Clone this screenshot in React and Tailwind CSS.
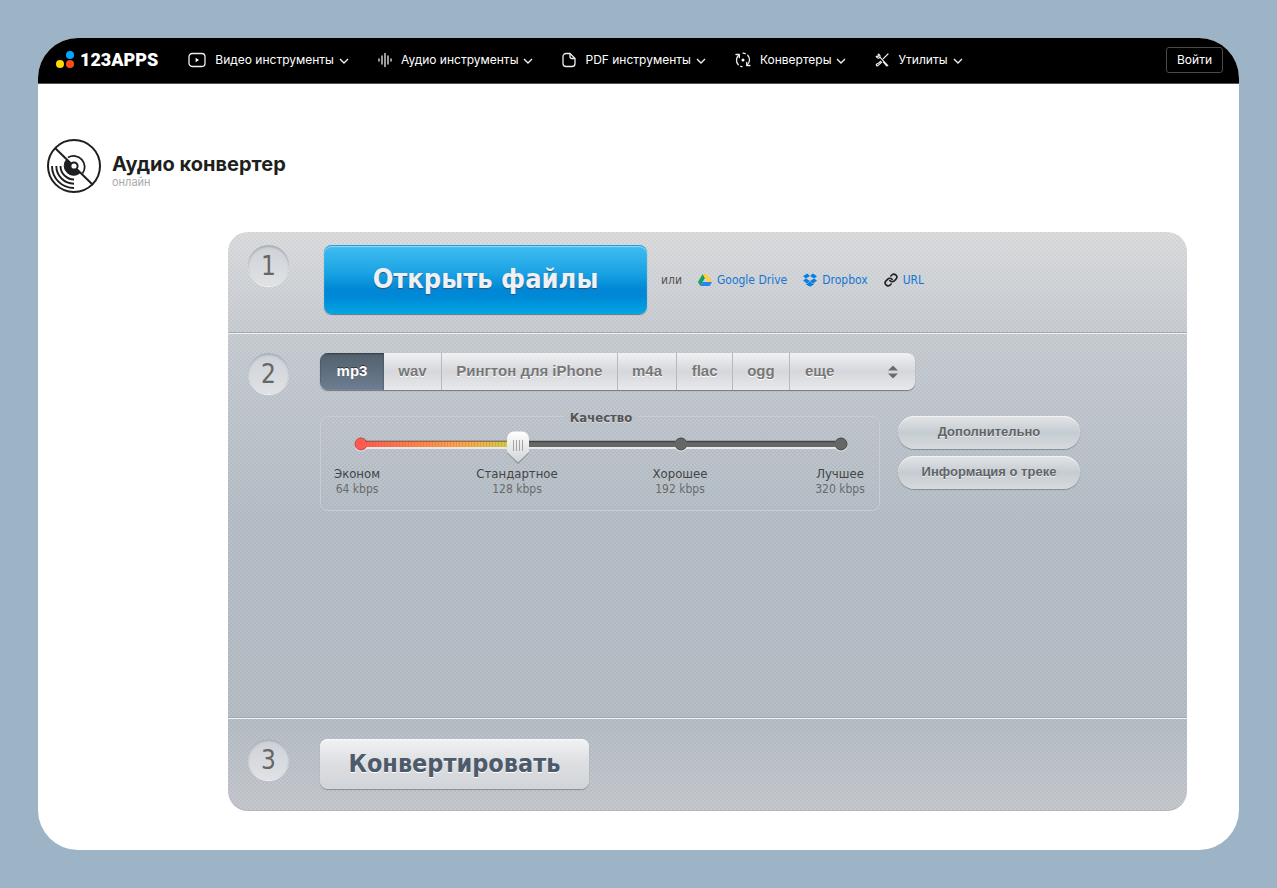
import { useState } from "react";

const navIcons = {
  video: (
    <svg width="18" height="16" viewBox="0 0 18 16" fill="none" stroke="#eee" strokeWidth="1.3">
      <rect x="1" y="1.5" width="16" height="13" rx="3.2" />
      <path d="M7.6 5.7v4.6L11 8z" fill="#fff" stroke="none" />
    </svg>
  ),
  audio: (
    <svg width="14" height="16" viewBox="0 0 14 16" fill="none" stroke="#eee" strokeWidth="1.3" strokeLinecap="round">
      <path d="M1 7v2M4 4v8M7 1.5v13M10 4v8M13 7v2" />
    </svg>
  ),
  pdf: (
    <svg width="14" height="16" viewBox="0 0 14 16" fill="none" stroke="#eee" strokeWidth="1.3" strokeLinejoin="round">
      <path d="M8 1.5H4A3 3 0 0 0 1 4.500v7a3 3 0 0 0 3 3h6a3 3 0 0 0 3-3V6.500z" />
      <path d="M8 1.500v3a2 2 0 0 0 2 2h3" />
    </svg>
  ),
  convert: (
    <svg width="16" height="16" viewBox="0 0 16 16" fill="none" stroke="#eee" strokeWidth="1.3" strokeLinecap="round" strokeLinejoin="round">
      <path d="M4 3A6.700 6.700 0 0 0 3.300 12.800M5.700 14.300l1.300.4M12 13A6.700 6.700 0 0 0 12.700 3.200M10.300 1.700l-2.300-.5" />
      <path d="M1 2.500h3.300v3.200M15 13.500h-3.300v-3.200" />
      <circle cx="8" cy="8" r="1.500" fill="#fff" stroke="none" />
    </svg>
  ),
  tools: (
    <svg width="14" height="14" viewBox="0 0 14 14" fill="none" stroke="#eee" strokeWidth="1.200" strokeLinecap="round" strokeLinejoin="round">
      <path d="M13 1 8.300 5.700M5.700 8.300 4.400 9.500 1.500 11.200a1 1 0 0 0 1.400 1.400L6.800 9.100" />
      <path d="M3.300 1.200a2.300 2.300 0 0 1 1.600 3L12.800 12.600M1.200 3.300a2.300 2.300 0 0 0 3 1.600M3.300 1.200v2.100H1.200M8.600 9.300l3.100 3.500" />
    </svg>
  ),
};

const navItems = [
  { label: "Видео инструменты", icon: "video" },
  { label: "Аудио инструменты", icon: "audio" },
  { label: "PDF инструменты", icon: "pdf" },
  { label: "Конвертеры", icon: "convert" },
  { label: "Утилиты", icon: "tools" },
];

const formats = ["mp3", "wav", "Рингтон для iPhone", "m4a", "flac", "ogg"];
const moreFormats = ["mp2", "amr"];

const levels = [
  { name: "Эконом", rate: "64 kbps" },
  { name: "Стандартное", rate: "128 kbps" },
  { name: "Хорошее", rate: "192 kbps" },
  { name: "Лучшее", rate: "320 kbps" },
];

function Header() {
  return (
    <header className="flex h-[46px] items-center border-b border-[#555] bg-black pr-4 pb-0.5 pl-[18px] font-[Inter,sans-serif] text-[12px] text-white">
      <a href="#home" className="mr-[30px] flex items-center gap-1">
        <svg width="20" height="20" viewBox="0 0 20 20" className="shrink-0">
          <circle cx="14" cy="5" r="4" fill="#00a8ff" />
          <circle cx="4" cy="14" r="4" fill="#ffd800" />
          <circle cx="14" cy="14" r="4" fill="#ff4c13" />
        </svg>
        <span className="font-[Roboto,sans-serif] text-[18px] leading-6 font-black">123APPS</span>
      </a>
      <nav className="flex flex-1 items-center gap-[29px]">
        {navItems.map((item) => (
          <a key={item.label} href="#menu" className="flex items-center whitespace-nowrap">
            <span className="mr-[9px] shrink-0">{navIcons[item.icon]}</span>
            {item.label}
            <svg width="10" height="6" viewBox="0 0 10 6" className="mt-0.5 ml-[5px] shrink-0" fill="none" stroke="#eee" strokeWidth="1.400">
              <path d="M1 1l4 4 4-4" />
            </svg>
          </a>
        ))}
      </nav>
      <button className="h-[26px] rounded-[3px] border border-[#4a4a4a] px-2.5">Войти</button>
    </header>
  );
}

function Disc() {
  return (
    <svg width="56" height="56" viewBox="0 0 56 56" fill="none" stroke="#1d1f20" strokeWidth="2">
      <circle cx="28" cy="28" r="26" />
      <path d="M9 10l38 37" />
      <path d="M22 19.500a11 11 0 0 1 14.500 16" strokeWidth="1.800" />
      <path d="M21 21a9.500 9.500 0 0 0 13.500 13.500z" fill="#1d1f20" strokeWidth="1" />
      <circle cx="28" cy="28" r="3.600" fill="#fff" strokeWidth="2" />
      <path d="M14.500 28A13.500 13.500 0 0 0 28 41.500M10.300 28A17.700 17.700 0 0 0 28 45.700M6 28A22 22 0 0 0 28 50" strokeWidth="1.900" />
    </svg>
  );
}

function StepNumber({ children }) {
  return (
    <span className="mr-[35px] flex size-[41px] shrink-0 items-center justify-center rounded-full bg-linear-to-b from-[#cdd1d7] to-[#e0e2e4] font-['DejaVu_Sans_Condensed','DejaVu_Sans',sans-serif] text-[26px] leading-none text-[#666] shadow-[inset_0_2px_2px_#a9afb7,0_1px_0_#f2f3f5]">
      {children}
    </span>
  );
}

function QualitySlider() {
  const [value, setValue] = useState(1);
  const x = [10, 167, 330, 490][value];
  return (
    <fieldset className="h-[105px] w-[560px] rounded-lg border border-[#c9ced3] pr-[28px] pl-[30px] shadow-[inset_0_0_1px_#a9b1ba]">
      <legend className="mx-auto px-1.5 pt-1 font-['DejaVu_Sans_Condensed','DejaVu_Sans',sans-serif] text-[13px] leading-4 font-bold text-[#555] [text-shadow:0_1px_0_#d5dae0]">
        Качество
      </legend>
      <div className="relative mt-[3px] h-9 w-[500px]">
        <svg width="500" height="36" viewBox="0 0 500 36">
          <defs>
            <linearGradient id="heat" gradientUnits="userSpaceOnUse" x1="10" x2="170" y1="0" y2="0">
              <stop offset="0" stopColor="#ff5a50" />
              <stop offset=".6" stopColor="#ff9f4a" />
              <stop offset="1" stopColor="#c6d548" />
            </linearGradient>
            <linearGradient id="handle" x1="0" x2="0" y1="0" y2="1">
              <stop offset="0" stopColor="#fff" />
              <stop offset="1" stopColor="#d2d3d5" />
            </linearGradient>
            <pattern id="ribs" width="3" height="8" patternUnits="userSpaceOnUse">
              <path d="M.5 0v8" stroke="#8a5a20" strokeOpacity=".18" />
            </pattern>
          </defs>
          <g fill="#e6e9ec">
            <circle cx="10" cy="16" r="6.500" />
            <circle cx="330" cy="16" r="6.500" />
            <circle cx="490" cy="16" r="6.500" />
            <rect x="10" y="13" width="480" height="7" />
          </g>
          <g fill="#666" stroke="#444">
            <circle cx="330" cy="15" r="6" />
            <circle cx="490" cy="15" r="6" />
          </g>
          <rect x="10" y="12" width="480" height="6" fill="#666" />
          <path d="M10 12.500H324.500M335.500 12.500H484.500" stroke="#444" strokeWidth="1.500" />
          <circle cx="10" cy="15" r="6" fill="#ff5a50" stroke="#b8484a" />
          <rect x="10" y="12" width={x - 10} height="6" fill="url(#heat)" />
          <rect x="14" y="12" width={Math.max(0, x - 14)} height="6" fill="url(#ribs)" />
          <rect x="14" y="12" width={Math.max(0, x - 14)} height="1" fill="#8d5238" fillOpacity=".7" />
          <g transform={`translate(${x} 0)`}>
            <path d="M-5 3.500H5a6 6 0 0 1 6 6V24L0 35-11 24V9.500a6 6 0 0 1 6-6z" fill="#6f777f" fillOpacity=".7" />
            <path d="M-4 2.500H4a7 7 0 0 1 7 7V23L0 33.500-11 23V9.500a7 7 0 0 1 7-7z" fill="url(#handle)" />
            <path d="M-4.500 11v11M-1.500 11v11M1.500 11v11M4.500 11v11" stroke="#a2a4a7" />
          </g>
        </svg>
        <input
          type="range"
          min="0"
          max="3"
          value={value}
          onChange={(e) => setValue(Number(e.target.value))}
          aria-label="Качество"
          className="absolute inset-0 size-full cursor-pointer opacity-0"
        />
      </div>
      <ul className="mt-px -mr-[72px] -ml-[74px] grid grid-cols-[160px_160px_166px_154px] text-center font-['DejaVu_Sans_Condensed','DejaVu_Sans',sans-serif]">
        {levels.map((level) => (
          <li key={level.name}>
            <div className="text-[13px] leading-4 text-[#444]">{level.name}</div>
            <div className="text-[12px] leading-[14px] text-[#6a6a6a]">{level.rate}</div>
          </li>
        ))}
      </ul>
    </fieldset>
  );
}

function PillButton({ children }) {
  return (
    <button className="h-[33px] w-[182px] rounded-full bg-linear-to-b from-[#e3e5e7] via-[#c5ccd2] to-[#d7dadd] pb-0.5 font-['Liberation_Sans',sans-serif] text-[13px] font-bold text-[#606468] shadow-[inset_0_1px_0_#f2f3f4,0_1px_1px_#848c94] [text-shadow:0_1px_0_#eee]">
      {children}
    </button>
  );
}

function Converter() {
  const [format, setFormat] = useState("mp3");
  return (
    <main className="mr-[52px] mb-[39px] ml-[190px] overflow-hidden rounded-[20px] bg-[repeating-conic-gradient(#ffffff12_0_25%,#00000006_0_50%),linear-gradient(#d9dadc,#c5cad0_18%,#b3bcc5_48%,#b2bac3_84%,#c2c6cb)] bg-[length:4px_4px,100%_100%] shadow-[inset_0_-1px_0_#b3b7bb]">
      <section className="flex h-[101px] border-b border-[#a5aab0] px-5 pt-[13px]">
        <StepNumber>1</StepNumber>
        <button className="h-[69px] w-[323px] shrink-0 rounded-lg bg-[linear-gradient(#43bdf0,#1aa3e4_40%,#0087d5_65%,#0088d6_75%,#00a6e2)] font-['DejaVu_Sans_Condensed','DejaVu_Sans',sans-serif] text-[27px] font-bold text-[#eef0f3] shadow-[inset_0_1px_0_#2b9dd2,inset_0_2px_1px_#8fdcf9,0_1px_1px_#5e7890] [text-shadow:0_1px_1px_#28557a]">
          Открыть файлы
        </button>
        <div className="ml-3.5 flex h-[69px] items-center gap-4 font-['DejaVu_Sans_Condensed','DejaVu_Sans',sans-serif] text-[12px] whitespace-nowrap text-[#1576d3]">
          <span className="text-[#555]">или</span>
          <a href="#drive" className="flex items-center gap-[5px]">
            <svg width="14" height="12" viewBox="0 0 14 12">
              <path d="M4.700 0 0 8l2.300 4L7 4z" fill="#11a35e" />
              <path d="M4.700 0h4.600L14 8H9.300z" fill="#ffcf43" />
              <path d="M4.600 8H14l-2.300 4H2.300z" fill="#2684f5" />
            </svg>
            Google Drive
          </a>
          <a href="#dropbox" className="flex items-center gap-[5px]">
            <svg width="14" height="14" viewBox="0 0 14 14" fill="#087ee1">
              <path d="M4.100.5 0 3.200l2.900 2.300L7 3zM9.900.5 14 3.200l-2.900 2.300L7 3zM0 7.800l4.100 2.700L7 8 2.900 5.500zM14 7.800l-4.100 2.700L7 8l4.100-2.500zM7 8.600l-2.900 2.500-1.200-.8v.9L7 13.700l4.100-2.500v-.9l-1.200.8z" />
            </svg>
            Dropbox
          </a>
          <a href="#url" className="flex items-center gap-[5px]">
            <svg width="14" height="14" viewBox="0 0 24 24" fill="none" stroke="#222" strokeWidth="2.800" strokeLinecap="round" strokeLinejoin="round">
              <path d="M10 13a5 5 0 0 0 7.540.54l3-3a5 5 0 0 0-7.070-7.070l-1.720 1.710" />
              <path d="M14 11a5 5 0 0 0-7.540-.54l-3 3a5 5 0 0 0 7.070 7.070l1.710-1.710" />
            </svg>
            URL
          </a>
        </div>
      </section>
      <section className="flex min-h-[385px] border-t border-b border-t-[#f0f1f3] border-b-[#a5aab0] px-5 pt-[19px]">
        <StepNumber>2</StepNumber>
        <div className="-ml-1 flex flex-col">
          <div className="flex h-[37px] w-[595px] overflow-hidden rounded-lg bg-linear-to-b from-[#f1f1f3] via-[#d5d7dc] to-[#e8e9eb] font-['Liberation_Sans',sans-serif] text-[15px] font-bold text-[#777] shadow-[0_1px_1px_#737980]">
            {formats.map((name) => (
              <button
                key={name}
                aria-pressed={format === name}
                onClick={() => setFormat(name)}
                className={
                  format === name
                    ? "w-[64px] bg-linear-to-b from-[#53606d] to-[#6c7e91] text-white shadow-[inset_0_1px_2px_#333b45,inset_0_-1px_0_#77889a] [text-shadow:0_-1px_0_#333]"
                    : "grow border-r border-[#b5b9c0] px-3 whitespace-nowrap [text-shadow:0_1px_0_#fff]"
                }
              >
                {name}
              </button>
            ))}
            <div className="relative w-[125px]">
              <select aria-label="Другие форматы" className="size-full appearance-none bg-transparent pl-[15px] outline-none [text-shadow:0_1px_0_#fff]">
                <option>еще</option>
                {moreFormats.map((name) => (
                  <option key={name}>{name}</option>
                ))}
              </select>
              <svg width="10" height="14" viewBox="0 0 10 14" fill="#6b6b6b" className="pointer-events-none absolute top-3 right-[17px]">
                <path d="M0 5.500 5 .5l5 5zM0 8.500l5 5 5-5z" />
              </svg>
            </div>
          </div>
          <div className="mt-4 flex items-start gap-[18px]">
            <QualitySlider />
            <div className="mt-[10px] flex flex-col gap-[7px]">
              <PillButton>Дополнительно</PillButton>
              <PillButton>Информация о треке</PillButton>
            </div>
          </div>
        </div>
      </section>
      <section className="flex h-[93px] border-t border-[#f0f1f3] px-5 pt-5">
        <StepNumber>3</StepNumber>
        <button className="-ml-1 h-[50px] w-[269px] rounded-lg bg-linear-to-b from-[#f1f2f3] via-[#dcdee1] to-[#d1d4d9] font-['DejaVu_Sans_Condensed','DejaVu_Sans',sans-serif] text-[25px] font-bold text-[#4c5a69] shadow-[inset_0_1px_0_#fafafa,0_1px_1px_#868d94] [text-shadow:0_1px_0_#fff]">
          Конвертировать
        </button>
      </section>
    </main>
  );
}

export default function App() {
  return (
    <div className="min-h-screen bg-[#9db4c6] p-[38px]">
      <div className="overflow-hidden rounded-[40px] bg-white">
        <Header />
        <div className="flex items-center gap-2.5 pt-[54px] pb-[38px] pl-2">
          <Disc />
          <div className="pt-2 font-[Inter,sans-serif]">
            <h1 className="text-[20px] leading-6 font-bold text-[#1d1f20]">Аудио конвертер</h1>
            <p className="text-[11px] leading-3 text-[#aaa]">онлайн</p>
          </div>
        </div>
        <Converter />
      </div>
    </div>
  );
}
